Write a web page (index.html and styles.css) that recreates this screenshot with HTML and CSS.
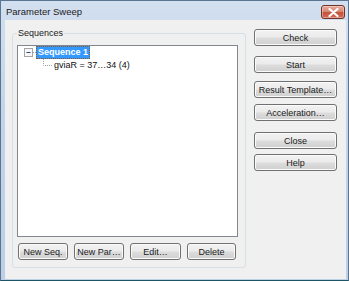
FILE: index.html
```html
<!DOCTYPE html>
<html lang="en">
<head>
    <meta charset="UTF-8">
    <title>Parameter Sweep</title>
    <link rel="stylesheet" href="styles.css">
</head>
<body>
    <div class="window">
        <div class="titlebar">
            <span class="title">Parameter Sweep</span>
            <button class="close-x" aria-label="Close">
                <svg width="11" height="9" viewBox="0 0 11 9">
                    <path d="M1.5 1 L9.5 8 M9.5 1 L1.5 8" stroke="#fff" stroke-width="2.2" stroke-linecap="round"/>
                </svg>
            </button>
        </div>
        <div class="client">
            <fieldset class="group">
                <legend>Sequences</legend>
                <div class="tree">
                    <div class="node root">
                        <svg class="twig" width="14" height="13" viewBox="0 0 14 13">
                            <rect x="2.5" y="2.5" width="8" height="8" fill="#f7f7f7" stroke="#a5a5a5"/>
                            <path d="M4.5 6.5 H8.5" stroke="#2b4a78"/>
                            <path d="M11 6.5 H14" stroke="#a0a0a0" stroke-dasharray="1 1"/>
                        </svg>
                        <span class="label selected">Sequence 1</span>
                    </div>
                    <div class="node child">
                        <svg class="twig" width="12" height="13" viewBox="0 0 12 13">
                            <path d="M3.5 0 V6.5 H12" fill="none" stroke="#a0a0a0" stroke-dasharray="1 1"/>
                        </svg>
                        <span class="label">gviaR = 37…34 (4)</span>
                    </div>
                </div>
                <div class="row">
                    <button class="btn">New Seq.</button>
                    <button class="btn">New Par…</button>
                    <button class="btn wide">Edit…</button>
                    <button class="btn narrow">Delete</button>
                </div>
            </fieldset>
            <div class="side">
                <button class="btn side-btn">Check</button>
                <button class="btn side-btn start">Start</button>
                <button class="btn side-btn result">Result Template…</button>
                <button class="btn side-btn accel">Acceleration…</button>
                <button class="btn side-btn close">Close</button>
                <button class="btn side-btn help">Help</button>
            </div>
        </div>
    </div>
</body>
</html>
```

FILE: styles.css
```css
body {
    margin: 0;
    font-family: 'Liberation Sans', Arial, sans-serif;
    font-size: 9px;
    color: #1a1a1a;
    background: #fff;
}

.window {
    width: 349px;
    height: 281px;
    box-sizing: border-box;
    border: 1px solid #5b7590;
    border-bottom-color: #1d5566;
    background: linear-gradient(180deg, #d2dfef 0%, #c3d4ea 40%, #bccfe6 100%);
    display: flex;
    flex-direction: column;
}

.titlebar {
    height: 19px;
    display: flex;
    align-items: center;
    justify-content: space-between;
    padding: 0 3px 0 5px;
}

.title {
    font-size: 9.5px;
    color: #1c1c1c;
    margin-top: 1px;
}

.close-x {
    width: 24px;
    height: 14px;
    margin-top: 3px;
    padding: 0;
    border: 1px solid #6f3426;
    border-radius: 3px;
    background: linear-gradient(180deg, #e9a99b 0%, #d98a78 45%, #c3523c 55%, #d56b55 100%);
    box-shadow: inset 0 0 0 1px rgba(255, 255, 255, 0.35);
    display: flex;
    align-items: center;
    justify-content: center;
}

.client {
    flex: 1;
    margin: 0 2px 1px 4px;
    background: #f0f0f0;
    display: flex;
    padding: 8px 9px 0 7px;
    gap: 8px;
}

.group {
    margin: 0;
    width: 234px;
    height: 240px;
    box-sizing: border-box;
    border: 1px solid #d5dfe5;
    border-radius: 3px;
    padding: 0 7px 7px 4px;
    display: flex;
    flex-direction: column;
}

.group legend {
    padding: 0 1px;
    font-size: 9px;
    line-height: 11px;
}

.tree {
    margin-top: 6px;
    height: 192px;
    box-sizing: border-box;
    border: 1px solid #828790;
    background: #fff;
    padding: 0 0 0 4px;
}

.node {
    display: flex;
    align-items: center;
    height: 13px;
}

.child {
    padding-left: 18px;
}

.twig {
    display: block;
    flex: none;
}

.label {
    line-height: 11px;
    padding: 0 2px;
    white-space: nowrap;
    color: #111;
}

.label.selected {
    background: #3399ff;
    color: #fff;
    font-weight: bold;
    padding: 0 2px;
    outline: 1px dotted #8a5a2a;
    outline-offset: -1px;
    line-height: 13px;
}

.row {
    display: flex;
    gap: 6px;
    margin-top: 6px;
    padding-left: 1px;
}

.btn {
    height: 17px;
    width: 50px;
    padding: 0;
    font-family: 'Liberation Sans', Arial, sans-serif;
    font-size: 9px;
    color: #1a1a1a;
    border: 1px solid #707070;
    border-radius: 3px;
    background: linear-gradient(180deg, #f2f2f2 0%, #ebebeb 48%, #dddddd 52%, #cfcfcf 100%);
    box-shadow: inset 0 0 0 1px #fbfbfb;
    white-space: nowrap;
}

.btn.wide {
    width: 51px;
}

.btn.narrow {
    width: 49px;
}

.side {
    display: flex;
    flex-direction: column;
    padding-top: 1px;
}

.side-btn {
    width: 83px;
}

.start {
    margin-top: 10px;
}

.result {
    margin-top: 8px;
}

.accel {
    margin-top: 6px;
}

.close {
    margin-top: 11px;
}

.help {
    margin-top: 5px;
}
```
